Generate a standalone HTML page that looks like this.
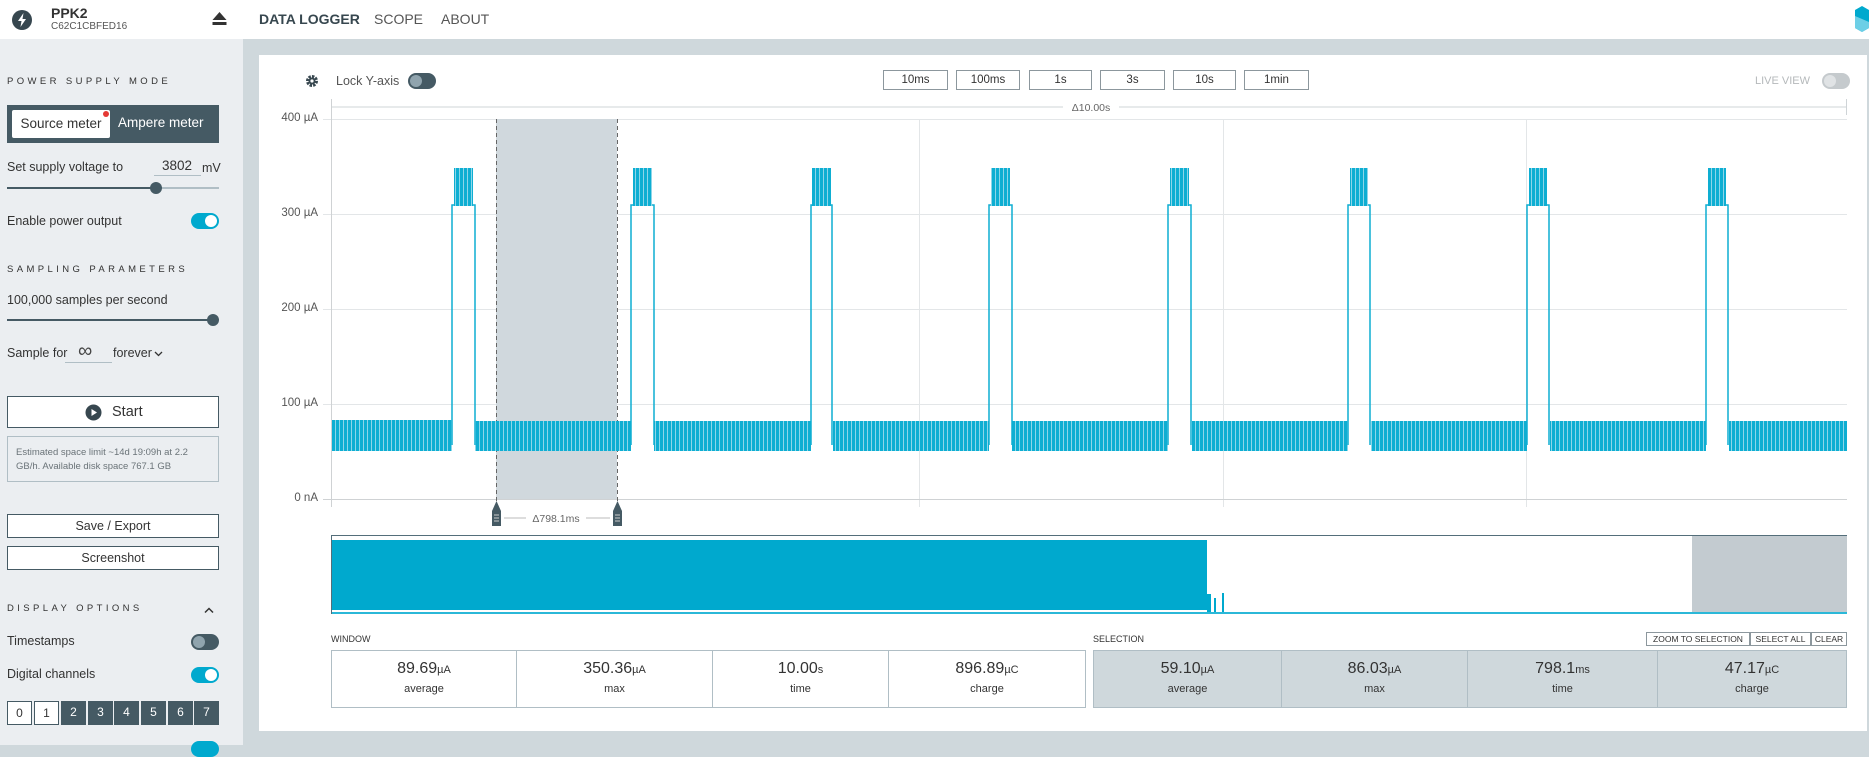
<!DOCTYPE html>
<html><head><meta charset="utf-8">
<style>
*{box-sizing:border-box;margin:0;padding:0}
body{width:1869px;height:745px;overflow:hidden;background:#cfd8dc;font-family:"Liberation Sans",Arial,sans-serif;color:#333;position:relative}
.a{position:absolute}
.hdr{left:0;top:0;width:1869px;height:39px;background:#fff}
.side{left:0;top:39px;width:243px;height:706px;background:#ebeef1}
.cap{font-size:9.5px;letter-spacing:3.4px;color:#333}
.t13{font-size:12.5px;color:#333}
.tog{width:28px;height:16px;border-radius:8px}
.tog i{position:absolute;top:2px;width:12px;height:12px;border-radius:50%}
.btn{border:1px solid #455a64;background:#fff;text-align:center;font-size:12.5px;color:#333}
.ch{width:25px;height:24px;font-size:12px;text-align:center;line-height:22px}
.tb{height:20px;border:1px solid #8c979d;font-size:11.5px;text-align:center;line-height:18px;color:#333;background:#fff}
.yl{font-size:11.5px;color:#555;text-align:right;width:60px}
.st{height:58px;border:1px solid #b0bec5;text-align:center}
.st b{display:block;font-weight:normal;font-size:16px;margin-top:9px;color:#333}
.st b small{font-size:11px}
.st span{display:block;font-size:11px;margin-top:5px;color:#333}
.sel{background:#cfd8dc}
.sb{top:632px;height:14px;border:1px solid #8c979d;font-size:8.5px;line-height:12px;text-align:center;background:#fff;color:#333}
</style></head><body>
<div class="a hdr"></div>
<svg class="a" style="left:11px;top:9px" width="22" height="22" viewBox="0 0 22 22"><circle cx="11" cy="11" r="10" fill="#37474f"/><path d="M12.5 4 L7 12 H10.5 L9.5 18 L15 10 H11.5 Z" fill="#fff"/></svg>
<div class="a" style="left:51px;top:5px;font-size:14px;font-weight:bold;color:#333">PPK2</div>
<div class="a" style="left:51px;top:21px;font-size:10px;color:#555">C62C1CBFED16</div>
<svg class="a" style="left:212px;top:12px" width="15" height="14"><path d="M7.5 0 L14.5 8 H0.5 Z" fill="#333"/><rect x="0.5" y="10" width="14" height="3" fill="#333"/></svg>
<div class="a" style="left:259px;top:11px;font-size:14px;font-weight:bold;color:#37474f">DATA LOGGER</div>
<div class="a" style="left:374px;top:11px;font-size:14px;color:#555">SCOPE</div>
<div class="a" style="left:441px;top:11px;font-size:14px;color:#555">ABOUT</div>
<svg class="a" style="left:1855px;top:6px" width="14" height="26"><path d="M0 4 L7 0 L14 4 V22 L7 26 L0 22 Z" fill="#00a9ce"/><path d="M0 10 L14 16 V22 L7 26 L0 22 Z" fill="#6dcfe6"/></svg>

<div class="a side"></div>
<div class="a cap" style="left:7px;top:76px">POWER SUPPLY MODE</div>
<div class="a" style="left:7px;top:105px;width:212px;height:38px;background:#455a64"></div>
<div class="a" style="left:12px;top:110px;width:98px;height:28px;background:#fff;border-radius:2px;font-size:13.5px;line-height:28px;text-align:center;color:#333">Source meter</div>
<div class="a" style="left:103px;top:111px;width:6px;height:6px;border-radius:50%;background:#e53935"></div>
<div class="a" style="left:118px;top:115px;font-size:13.5px;color:#fff">Ampere meter</div>
<div class="a t13" style="left:7px;top:160px">Set supply voltage to</div>
<div class="a" style="left:162px;top:158px;font-size:13.5px;color:#333">3802</div>
<div class="a" style="left:154px;top:175px;width:47px;height:1px;background:#b0bec5"></div>
<div class="a t13" style="left:202px;top:161px">mV</div>
<div class="a" style="left:7px;top:187px;width:212px;height:2px;background:#b0bec5"></div>
<div class="a" style="left:7px;top:187px;width:149px;height:2px;background:#455a64"></div>
<div class="a" style="left:150px;top:182px;width:12px;height:12px;border-radius:50%;background:#455a64"></div>
<div class="a t13" style="left:7px;top:214px">Enable power output</div>
<div class="a tog" style="left:191px;top:213px;background:#00a9ce"><i style="left:14px;background:#fff"></i></div>
<div class="a cap" style="left:7px;top:264px">SAMPLING PARAMETERS</div>
<div class="a t13" style="left:7px;top:293px">100,000 samples per second</div>
<div class="a" style="left:7px;top:319px;width:208px;height:2px;background:#455a64"></div>
<div class="a" style="left:207px;top:314px;width:12px;height:12px;border-radius:50%;background:#455a64"></div>
<div class="a t13" style="left:7px;top:346px">Sample for</div>
<div class="a" style="left:78px;top:340px;font-size:20px;color:#444">∞</div>
<div class="a" style="left:65px;top:362px;width:47px;height:1px;background:#b0bec5"></div>
<div class="a t13" style="left:113px;top:346px">forever</div>
<svg class="a" style="left:154px;top:351px" width="9" height="6"><path d="M1 1 L4.5 4.5 L8 1" stroke="#333" stroke-width="1.3" fill="none"/></svg>
<div class="a btn" style="left:7px;top:396px;width:212px;height:32px"></div>
<svg class="a" style="left:85px;top:404px" width="17" height="17"><circle cx="8.5" cy="8.5" r="8" fill="#37474f"/><path d="M6.5 5 L12 8.5 L6.5 12 Z" fill="#fff"/></svg>
<div class="a" style="left:112px;top:404px;font-size:14.5px;color:#333">Start</div>
<div class="a" style="left:7px;top:436px;width:212px;height:46px;border:1px solid #b0bec5;font-size:9.5px;color:#6a7378;line-height:14px;padding:9px 0 0 8px">Estimated space limit ~14d 19:09h at 2.2<br>GB/h. Available disk space 767.1 GB</div>
<div class="a btn" style="left:7px;top:514px;width:212px;height:24px;line-height:22px">Save / Export</div>
<div class="a btn" style="left:7px;top:546px;width:212px;height:24px;line-height:22px">Screenshot</div>
<div class="a cap" style="left:7px;top:603px">DISPLAY OPTIONS</div>
<svg class="a" style="left:204px;top:607px" width="10" height="7"><path d="M1 5.5 L5 1.5 L9 5.5" stroke="#333" stroke-width="1.5" fill="none"/></svg>
<div class="a t13" style="left:7px;top:634px">Timestamps</div>
<div class="a tog" style="left:191px;top:634px;background:#455a64"><i style="left:2px;background:#90a4ae"></i></div>
<div class="a t13" style="left:7px;top:667px">Digital channels</div>
<div class="a tog" style="left:191px;top:667px;background:#00a9ce"><i style="left:14px;background:#fff"></i></div>
<div class="a ch" style="left:7px;top:701px;border:1px solid #455a64;background:#fff">0</div>
<div class="a ch" style="left:34px;top:701px;border:1px solid #455a64;background:#fff">1</div>
<div class="a ch" style="left:61px;top:701px;background:#455a64;color:#fff">2</div>
<div class="a ch" style="left:88px;top:701px;background:#455a64;color:#fff">3</div>
<div class="a ch" style="left:114px;top:701px;background:#455a64;color:#fff">4</div>
<div class="a ch" style="left:141px;top:701px;background:#455a64;color:#fff">5</div>
<div class="a ch" style="left:168px;top:701px;background:#455a64;color:#fff">6</div>
<div class="a ch" style="left:194px;top:701px;background:#455a64;color:#fff">7</div>
<div class="a tog" style="left:191px;top:741px;background:#00a9ce"></div>

<div class="a" style="left:259px;top:55px;width:1608px;height:676px;background:#fff"></div>
<svg class="a" style="left:305px;top:74px" width="14" height="14" viewBox="0 0 14 14"><circle cx="7" cy="7" r="4.5" fill="none" stroke="#37474f" stroke-width="3" stroke-dasharray="2.4 1.1"/><circle cx="7" cy="7" r="3.5" fill="#37474f"/><circle cx="7" cy="7" r="1.6" fill="#fff"/></svg>
<div class="a t13" style="left:336px;top:74px;color:#555">Lock Y-axis</div>
<div class="a tog" style="left:408px;top:73px;background:#455a64"><i style="left:2px;background:#90a4ae"></i></div>
<div class="a tb" style="left:883px;top:70px;width:65px">10ms</div>
<div class="a tb" style="left:956px;top:70px;width:64px">100ms</div>
<div class="a tb" style="left:1029px;top:70px;width:63px">1s</div>
<div class="a tb" style="left:1100px;top:70px;width:65px">3s</div>
<div class="a tb" style="left:1173px;top:70px;width:63px">10s</div>
<div class="a tb" style="left:1244px;top:70px;width:65px">1min</div>
<div class="a" style="left:1755px;top:75px;font-size:11px;color:#b5b9bb">LIVE VIEW</div>
<div class="a tog" style="left:1822px;top:73px;background:#c5cacd"><i style="left:2px;background:#e0e3e5"></i></div>

<svg class="a" style="left:0;top:0" width="1869" height="745">
<defs>
<pattern id="nz" width="4" height="10" patternUnits="userSpaceOnUse"><rect width="3" height="10" fill="#0eaed2"/><rect x="3" width="1" height="10" fill="#8ed6e9"/></pattern>
</defs>
<line x1="331" y1="107" x2="1847" y2="107" stroke="#cfd4d7"/>
<line x1="331.5" y1="99" x2="331.5" y2="115" stroke="#cfd4d7"/>
<line x1="1846.5" y1="99" x2="1846.5" y2="115" stroke="#cfd4d7"/>
<rect x="1063" y="100" width="56" height="14" fill="#fff"/>
<text x="1091" y="111" font-size="10.5" fill="#666" text-anchor="middle" font-family="Liberation Sans">Δ10.00s</text>
<g stroke="#e3e6e8">
<line x1="323" y1="119.5" x2="1847" y2="119.5"/><line x1="323" y1="214.5" x2="1847" y2="214.5"/><line x1="323" y1="309.5" x2="1847" y2="309.5"/><line x1="323" y1="404.5" x2="1847" y2="404.5"/>
<line x1="919.5" y1="119" x2="919.5" y2="507"/><line x1="1223.5" y1="119" x2="1223.5" y2="507"/><line x1="1526.5" y1="119" x2="1526.5" y2="507"/>
</g>
<line x1="323" y1="499.5" x2="1847" y2="499.5" stroke="#cfd2d4"/>
<line x1="331.5" y1="99" x2="331.5" y2="507" stroke="#cfd2d4"/>
<rect x="496" y="119" width="121" height="380" fill="#d0d8dd"/>
<line x1="496.5" y1="119" x2="496.5" y2="505" stroke="#666" stroke-dasharray="4 3"/>
<line x1="617.5" y1="119" x2="617.5" y2="505" stroke="#666" stroke-dasharray="4 3"/>
<g fill="url(#nz)">
<rect x="332" y="420" width="120" height="31"/>
<rect x="475" y="421" width="156" height="30"/>
<rect x="654" y="421" width="157" height="30"/>
<rect x="833" y="421" width="156" height="30"/>
<rect x="1012" y="421" width="156" height="30"/>
<rect x="1192" y="421" width="156" height="30"/>
<rect x="1371" y="421" width="156" height="30"/>
<rect x="1550" y="421" width="156" height="30"/>
<rect x="1729" y="421" width="118" height="30"/>
</g>
<g stroke="#0eaed2" stroke-width="1.5" fill="none">
<path d="M452 445 V205 H475 V445"/><path d="M631 445 V205 H654 V445"/><path d="M811 445 V205 H832 V445"/><path d="M989 445 V205 H1012 V445"/><path d="M1168 445 V205 H1191 V445"/><path d="M1348 445 V205 H1370 V445"/><path d="M1527 445 V205 H1549 V445"/><path d="M1706 445 V205 H1728 V445"/>
</g>
<g fill="url(#nz)">
<rect x="454" y="168" width="19" height="38"/><rect x="633" y="168" width="19" height="38"/><rect x="812" y="168" width="19" height="38"/><rect x="991" y="168" width="19" height="38"/><rect x="1170" y="168" width="19" height="38"/><rect x="1350" y="168" width="18" height="38"/><rect x="1529" y="168" width="18" height="38"/><rect x="1708" y="168" width="18" height="38"/>
</g>
<line x1="504" y1="518" x2="526" y2="518" stroke="#bbb"/><line x1="586" y1="518" x2="610" y2="518" stroke="#bbb"/>
<text x="556" y="522" font-size="10.5" fill="#666" text-anchor="middle" font-family="Liberation Sans">Δ798.1ms</text>
<path d="M496.5 501 L501 511 V526 H492 V511 Z" fill="#455a64"/>
<path d="M617.5 501 L622 511 V526 H613 V511 Z" fill="#455a64"/>
<g stroke="#ccc"><line x1="494" y1="515" x2="499" y2="515"/><line x1="494" y1="518" x2="499" y2="518"/><line x1="494" y1="521" x2="499" y2="521"/><line x1="615" y1="515" x2="620" y2="515"/><line x1="615" y1="518" x2="620" y2="518"/><line x1="615" y1="521" x2="620" y2="521"/></g>
<rect x="1692" y="536" width="155" height="78" fill="#c3cbd0"/>
<rect x="332" y="540" width="875" height="70" fill="#00a9ce"/>
<rect x="1207" y="594" width="4" height="20" fill="#00a9ce"/><rect x="1214" y="598" width="2" height="16" fill="#00a9ce"/><rect x="1222" y="593" width="2" height="21" fill="#00a9ce"/>
<line x1="331" y1="613" x2="1847" y2="613" stroke="#2bb8d8" stroke-width="2"/>
<path d="M331.5 614 V535.5 H1847" stroke="#546e7a" fill="none"/>
</svg>
<div class="a yl" style="left:258px;top:112px">400 µA</div>
<div class="a yl" style="left:258px;top:207px">300 µA</div>
<div class="a yl" style="left:258px;top:302px">200 µA</div>
<div class="a yl" style="left:258px;top:397px">100 µA</div>
<div class="a yl" style="left:258px;top:492px">0 nA</div>

<div class="a" style="left:331px;top:634px;font-size:9px;color:#333">WINDOW</div>
<div class="a" style="left:1093px;top:634px;font-size:9px;color:#333">SELECTION</div>
<div class="a sb" style="left:1646px;width:104px">ZOOM TO SELECTION</div>
<div class="a sb" style="left:1750px;width:61px">SELECT ALL</div>
<div class="a sb" style="left:1811px;width:36px">CLEAR</div>
<div class="a st" style="left:331px;top:650px;width:186px"><b>89.69<small>µA</small></b><span>average</span></div>
<div class="a st" style="left:516px;top:650px;width:197px"><b>350.36<small>µA</small></b><span>max</span></div>
<div class="a st" style="left:712px;top:650px;width:177px"><b>10.00<small>s</small></b><span>time</span></div>
<div class="a st" style="left:888px;top:650px;width:198px"><b>896.89<small>µC</small></b><span>charge</span></div>
<div class="a st sel" style="left:1093px;top:650px;width:189px"><b>59.10<small>µA</small></b><span>average</span></div>
<div class="a st sel" style="left:1281px;top:650px;width:187px"><b>86.03<small>µA</small></b><span>max</span></div>
<div class="a st sel" style="left:1467px;top:650px;width:191px"><b>798.1<small>ms</small></b><span>time</span></div>
<div class="a st sel" style="left:1657px;top:650px;width:190px"><b>47.17<small>µC</small></b><span>charge</span></div>
</body></html>
